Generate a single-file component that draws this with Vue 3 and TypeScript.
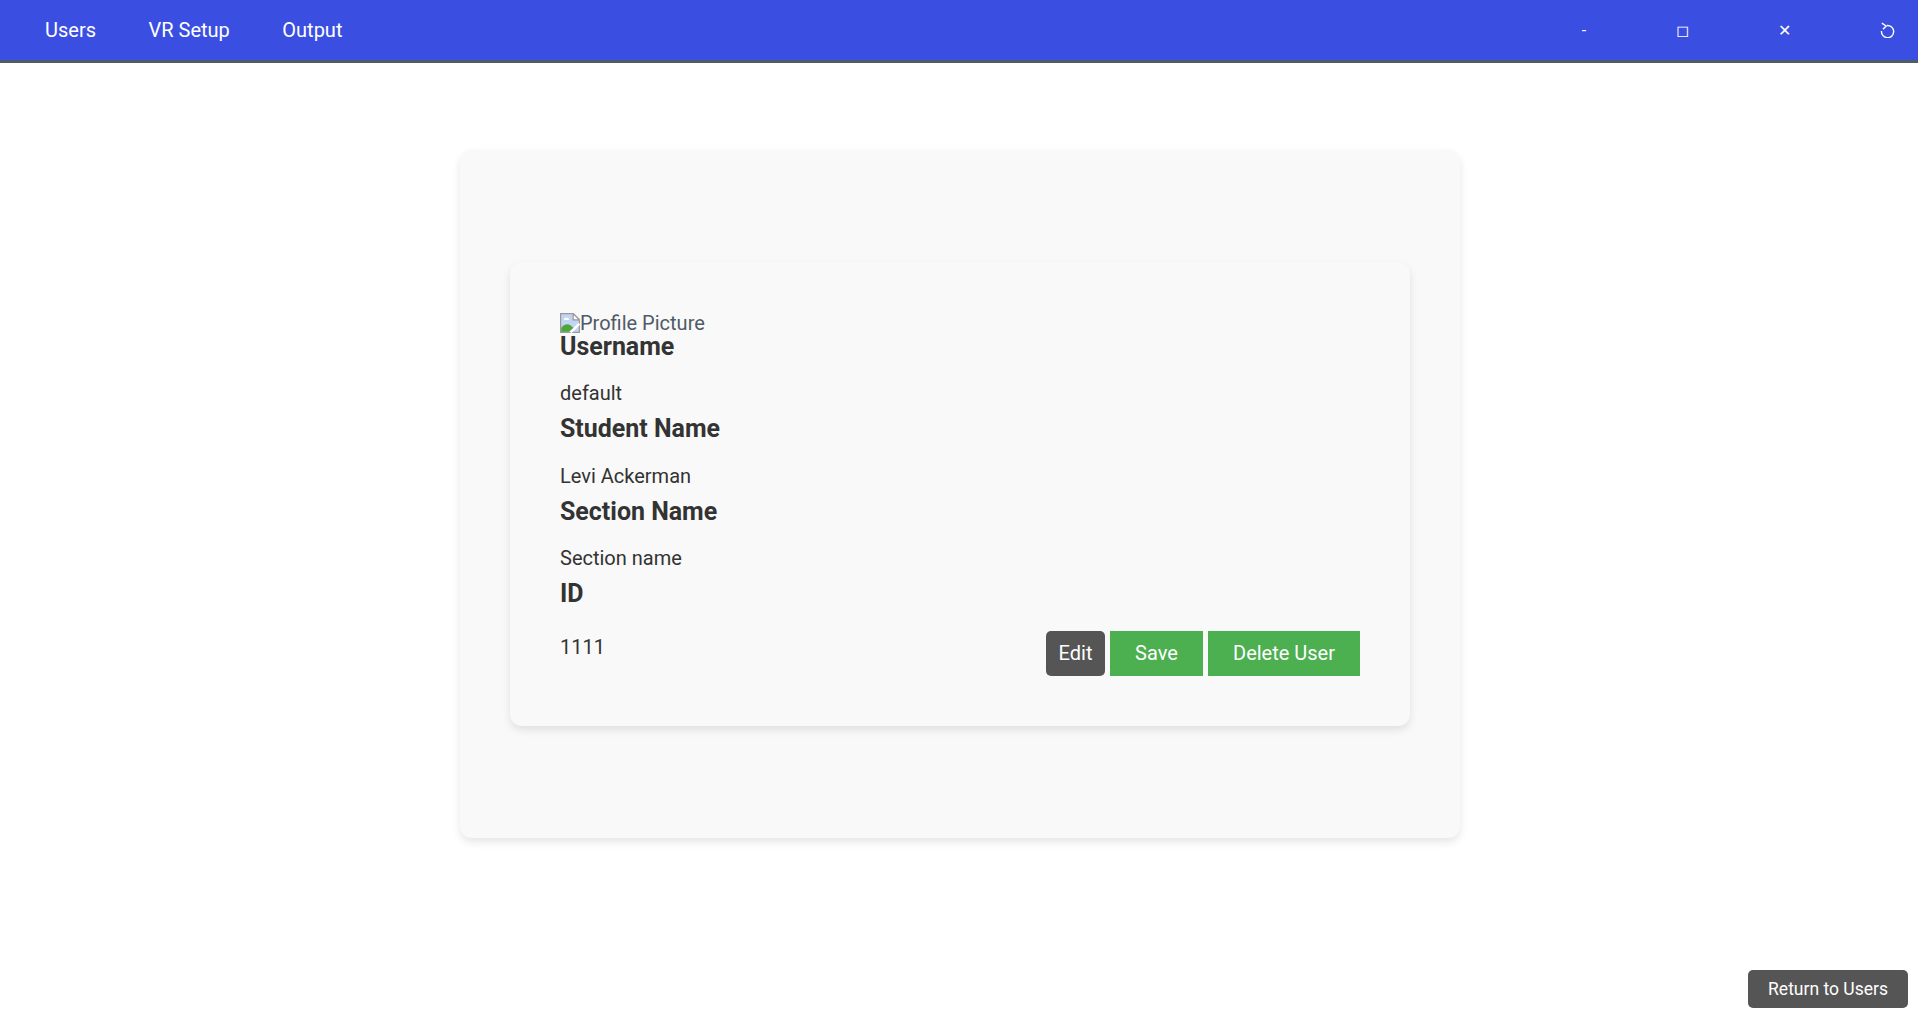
<script setup lang="ts">
const navItems: string[] = ['Users', 'VR Setup', 'Output']
const fields = [
  { label: 'Username', value: 'default' },
  { label: 'Student Name', value: 'Levi Ackerman' },
  { label: 'Section Name', value: 'Section name' },
]
</script>

<template>
  <div class="page">
    <header class="topbar">
      <nav class="nav">
        <a v-for="item in navItems" :key="item" class="nav-item">{{ item }}</a>
      </nav>
      <div class="win">
        <span class="win-btn min">-</span>
        <span class="win-btn max">◻</span>
        <span class="win-btn close">✕</span>
        <span class="win-btn reload">
          <svg width="16" height="16" viewBox="0 0 16 16" fill="none" stroke="#fff" stroke-width="1.4">
            <path d="M8 3.5A6.1 6.1 0 1 1 2.5 9" />
            <path d="M2.8 1.2L7.2 4L4 7.2" />
          </svg>
        </span>
      </div>
    </header>

    <main class="main">
      <section class="outer">
        <div class="inner">
          <div class="avatar">
            <svg class="broken" width="20" height="20" viewBox="0 0 16 16">
              <path d="M0.5 0.5H10.5L15.5 5.5V15.5H0.5Z" fill="#c3d5f5" stroke="#9a9a9a" />
              <path d="M3 5C3 4 5 3.5 6 4C7 4 8 5 7 5.5H3.5Z" fill="#fff" />
              <path d="M1 15V12C3 9 6 8.5 8 9.5L11 12L7 15Z" fill="#4fa53a" />
              <path d="M10.5 0.5V5.5H15.5Z" fill="#fff" stroke="#9a9a9a" />
              <path d="M8.5 15.5L15.5 8.5" stroke="#fff" stroke-width="2" />
            </svg><span>Profile Picture</span>
          </div>
          <template v-for="f in fields" :key="f.label">
            <h3 class="label">{{ f.label }}</h3>
            <p class="value">{{ f.value }}</p>
          </template>
          <h3 class="label">ID</h3>
          <div class="last-row">
            <p class="value id">1111</p>
            <div class="actions">
              <button class="btn dark">Edit</button>
              <button class="btn green save">Save</button>
              <button class="btn green del">Delete User</button>
            </div>
          </div>
        </div>
      </section>
    </main>

    <button class="return">Return to Users</button>
  </div>
</template>

<style scoped>
.page {
  position: relative;
  height: 1016px;
  background: #fff;
  font-family: Roboto, "Liberation Sans", sans-serif;
  overflow: hidden;
}
.topbar {
  height: 60px;
  background: #3b4ee2;
  border-bottom: 3px solid #4f5b66;
  display: flex;
  justify-content: space-between;
  align-items: center;
  color: #fff;
}
.nav {
  display: flex;
  gap: 52.5px;
  padding-left: 45px;
}
.nav-item {
  font-size: 20px;
  color: #fff;
}
.win {
  display: flex;
  align-items: center;
  height: 100%;
}
.win-btn {
  display: block;
  text-align: center;
  font-size: 16px;
  color: #fff;
}
.min { width: 92px; }
.max { width: 104px; }
.close { width: 100px; margin-right: 38px; }
.reload {
  width: 30px;
  height: 16px;
  margin-right: 16px;
  display: flex;
  justify-content: center;
}
.main {
  display: flex;
  padding: 87px 0 0 460px;
}
.outer {
  width: 1000px;
  height: 688px;
  box-sizing: border-box;
  padding: 112px 50px 0;
  background: #f9f9f9;
  border-radius: 12px;
  box-shadow: 0 4px 8px rgba(0, 0, 0, 0.1);
}
.inner {
  height: 464px;
  box-sizing: border-box;
  padding: 50px;
  background: #f9f9f9;
  border-radius: 12px;
  box-shadow: 0 4px 8px rgba(0, 0, 0, 0.1);
  display: flex;
  flex-direction: column;
}
.avatar {
  height: 20.5px;
  font-size: 20px;
  line-height: 22px;
  color: #4f5b66;
  display: flex;
  align-items: flex-start;
}
.broken { margin-top: 1px; }
.label {
  margin: 0;
  font-size: 24.96px;
  line-height: 28px;
  font-weight: 700;
  color: #333;
}
.value {
  margin: 21.5px 0 10px;
  font-size: 20px;
  line-height: 23px;
  color: #333;
}
.last-row {
  display: flex;
  justify-content: space-between;
  align-items: flex-start;
  margin-top: 22.5px;
}
.value.id { margin: 5.5px 0 0; }
.actions {
  display: flex;
  gap: 5px;
}
.btn {
  height: 45px;
  border: none;
  color: #fff;
  font-family: inherit;
  font-size: 20px;
  padding: 0;
}
.dark { width: 59px; background: #555; border-radius: 5px; }
.green { background: #4caf50; }
.save { width: 93px; }
.del { width: 152px; }
.return {
  position: absolute;
  right: 10px;
  bottom: 8px;
  width: 160px;
  height: 38px;
  border: none;
  border-radius: 5px;
  background: #555;
  color: #fff;
  font-family: inherit;
  font-size: 17.5px;
  padding: 0;
}
</style>
